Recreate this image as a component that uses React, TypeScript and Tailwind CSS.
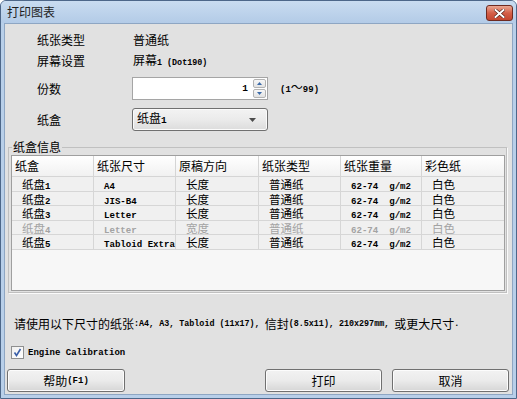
import React from "react";

const CJK = /([\u3000-\u9fff\uff00-\uffef]+)/;

// splits a string into CJK runs and latin runs, latin gets its own font
function Mix({ t, l }: { t: string; l: string }) {
  const parts = t.split(CJK).filter((p) => p.length > 0);
  return (
    <>
      {parts.map((p, i) =>
        CJK.test(p) ? (
          <span key={i}>{p}</span>
        ) : (
          <span key={i} className={l}>
            {p}
          </span>
        )
      )}
    </>
  );
}

const mono9 = "font-['Liberation_Mono',monospace] text-[9.5px] font-bold";
const monoCell = "font-['Liberation_Mono',monospace] text-[9.1px] font-bold";
const mono8 = "font-['Liberation_Mono',monospace] text-[9px] font-bold";
const mono7 = "font-['Liberation_Mono',monospace] text-[8.4px] font-bold";

const cols = [
  { name: "纸盒", w: "w-[82px]" },
  { name: "纸张尺寸", w: "w-[82px]" },
  { name: "原稿方向", w: "w-[83px]" },
  { name: "纸张类型", w: "w-[82px]" },
  { name: "纸张重量", w: "w-[81px]" },
  { name: "彩色纸", w: "w-[82px]" },
];

const rows = [
  { tray: "纸盘1", size: "A4", dir: "长度", type: "普通纸", weight: "62-74  g/m2", color: "白色", h: "h-[15px]" },
  { tray: "纸盘2", size: "JIS-B4", dir: "长度", type: "普通纸", weight: "62-74  g/m2", color: "白色", h: "h-[14px]" },
  { tray: "纸盘3", size: "Letter", dir: "长度", type: "普通纸", weight: "62-74  g/m2", color: "白色", h: "h-[15px]" },
  { tray: "纸盘4", size: "Letter", dir: "宽度", type: "普通纸", weight: "62-74  g/m2", color: "白色", h: "h-[14px]", off: true },
  { tray: "纸盘5", size: "Tabloid Extra", dir: "长度", type: "普通纸", weight: "62-74  g/m2", color: "白色", h: "h-[15px]" },
];

function Button({ label, w }: { label: string; w: string }) {
  return (
    <button
      className={`${w} h-[23px] rounded-[3px] border border-[#707070] bg-gradient-to-b from-[#f2f2f2] via-[#ebebeb] to-[#d6d6d6] shadow-[inset_0_0_0_1px_#fcfcfc] flex items-center justify-center`}
    >
      <Mix t={label} l={mono8} />
    </button>
  );
}

export default function App() {
  return (
    <div className="w-[517px] h-[399px] bg-[#b8cfe9] border border-[#4d6789] rounded-t-[6px] flex flex-col font-['Noto_Sans_CJK_SC',sans-serif] text-[12px] leading-[16px] text-black overflow-hidden">
      {/* title bar */}
      <div className="h-[22px] flex items-center justify-between pl-[6px] pr-[3px] bg-gradient-to-b from-[#c9dcf0] to-[#b3cbe7]">
        <span className="text-[#1e1e1e]">打印图表</span>
        <div className="w-[27px] h-[16px] mt-[2px] rounded-[3px] border border-[#6e2a20] bg-gradient-to-b from-[#e9a793] via-[#d45f48] to-[#c4462f] flex items-center justify-center">
          <svg width="11" height="9" viewBox="0 0 11 9">
            <path d="M1.5 1 L9.5 8 M9.5 1 L1.5 8" stroke="#4a1a12" strokeWidth="3.2" strokeLinecap="square" />
            <path d="M1.5 1 L9.5 8 M9.5 1 L1.5 8" stroke="#ffffff" strokeWidth="2" strokeLinecap="square" />
          </svg>
        </div>
      </div>

      {/* body */}
      <div className="flex-1 mx-[3px] mb-[3px] bg-[#e1e1e1] border border-[#8ea6c3] flex flex-col">
        <div className="flex flex-col pl-[32px] pt-[8px]">
          <div className="flex h-[16px] items-center">
            <span className="w-[96px]">纸张类型</span>
            <span>普通纸</span>
          </div>
          <div className="flex h-[16px] items-center mt-[5px]">
            <span className="w-[96px]">屏幕设置</span>
            <span>
              <Mix t="屏幕1 (Dot190)" l={mono7} />
            </span>
          </div>
          <div className="flex h-[23px] items-center mt-[8px]">
            <span className="w-[95px]">份数</span>
            <div className="flex h-[23px] w-[136px] border border-[#a5a5a5] bg-white">
              <div className="flex-1 flex items-center justify-end pr-[5px]">
                <span className={mono9}>1</span>
              </div>
              <div className="w-[14px] flex flex-col gap-[1px] py-[1px] pr-[1px]">
                <div className="flex-1 rounded-[2px] border border-[#b3b3b3] bg-gradient-to-b from-[#f7f7f7] to-[#e2e2e2] flex items-center justify-center">
                  <svg width="5" height="3" viewBox="0 0 5 3">
                    <path d="M0 3 L2.5 0 L5 3 Z" fill="#3b6aa8" />
                  </svg>
                </div>
                <div className="flex-1 rounded-[2px] border border-[#b3b3b3] bg-gradient-to-b from-[#f7f7f7] to-[#e2e2e2] flex items-center justify-center">
                  <svg width="5" height="3" viewBox="0 0 5 3">
                    <path d="M0 0 L5 0 L2.5 3 Z" fill="#3b6aa8" />
                  </svg>
                </div>
              </div>
            </div>
            <span className="ml-[12px]">
              <Mix t="(1～99)" l={mono8} />
            </span>
          </div>
          <div className="flex h-[23px] items-center mt-[8px]">
            <span className="w-[95px]">纸盒</span>
            <div className="h-[23px] w-[136px] rounded-[3px] border border-[#707070] bg-gradient-to-b from-[#f3f3f3] via-[#ebebeb] to-[#dcdcdc] shadow-[inset_0_0_0_1px_#fbfbfb] flex items-center justify-between pl-[4px] pr-[11px]">
              <span>
                <Mix t="纸盘1" l={mono9} />
              </span>
              <svg width="7" height="4" viewBox="0 0 7 4">
                <path d="M0 0 L7 0 L3.5 4 Z" fill="#4b4b4b" />
              </svg>
            </div>
          </div>
        </div>

        {/* group box */}
        <div className="relative mt-[16px] ml-[3px] mr-[5px] h-[146px] border border-[#c0c0c0] shadow-[1px_1px_0_#fafafa] pt-[7px] pl-[2px] pr-[1px] pb-[1px] flex">
          <span className="absolute left-[3px] top-[-9px] bg-[#e1e1e1] px-[1px]">纸盒信息</span>
          <div className="flex-1 border border-[#9f9f9f] bg-[#f7f7f7] flex flex-col">
            <div className="flex h-[21px] border-b border-[#d5d5d5] bg-gradient-to-b from-[#ffffff] to-[#f1f1f1]">
              {cols.map((c, i) => (
                <div
                  key={c.name}
                  className={`${c.w} flex items-center pl-[3px] ${i < cols.length - 1 ? "border-r border-[#d5d5d5]" : ""}`}
                >
                  {c.name}
                </div>
              ))}
            </div>
            {rows.map((r) => {
              const cells = [r.tray, r.size, r.dir, r.type, r.weight, r.color];
              return (
                <div
                  key={r.tray}
                  className={`flex ${r.h} text-[11.5px] border-b border-[#d6d6d6] bg-[#f0f0f0] ${r.off ? "text-[#a3a3a3]" : "text-black"}`}
                >
                  {cells.map((v, i) => (
                    <div
                      key={i}
                      className={`${cols[i].w} shrink-0 flex items-center pl-[10px] whitespace-pre ${i < cols.length - 1 ? "border-r border-[#d6d6d6]" : ""}`}
                    >
                      <span className="inline-block leading-[12px] h-[12px]">
                        <Mix t={v} l={monoCell} />
                      </span>
                    </div>
                  ))}
                </div>
              );
            })}
          </div>
        </div>

        <div className="mt-[24px] pl-[9px] h-[14px] flex items-center whitespace-pre">
          <Mix t="请使用以下尺寸的纸张:A4, A3, Tabloid (11x17), 信封(8.5x11), 210x297mm, 或更大尺寸." l={mono7} />
        </div>

        <div className="mt-[15px] pl-[6px] flex items-center h-[13px] gap-[4px]">
          <div className="w-[13px] h-[13px] border border-[#8e8f8f] bg-gradient-to-br from-[#f0f0f0] to-[#ffffff] flex items-center justify-center">
            <svg width="9" height="9" viewBox="0 0 9 9">
              <path d="M1.5 4.5 L3.5 7.5 L7.5 1" stroke="#3a5fa8" strokeWidth="1.6" fill="none" />
            </svg>
          </div>
          <span className={mono8}>Engine Calibration</span>
        </div>

        <div className="mt-[10px] pl-[2px] pr-[3px] flex items-center">
          <Button label="帮助(F1)" w="w-[118px]" />
          <div className="flex-1" />
          <Button label="打印" w="w-[117px]" />
          <div className="w-[10px]" />
          <Button label="取消" w="w-[117px]" />
        </div>
      </div>
    </div>
  );
}
